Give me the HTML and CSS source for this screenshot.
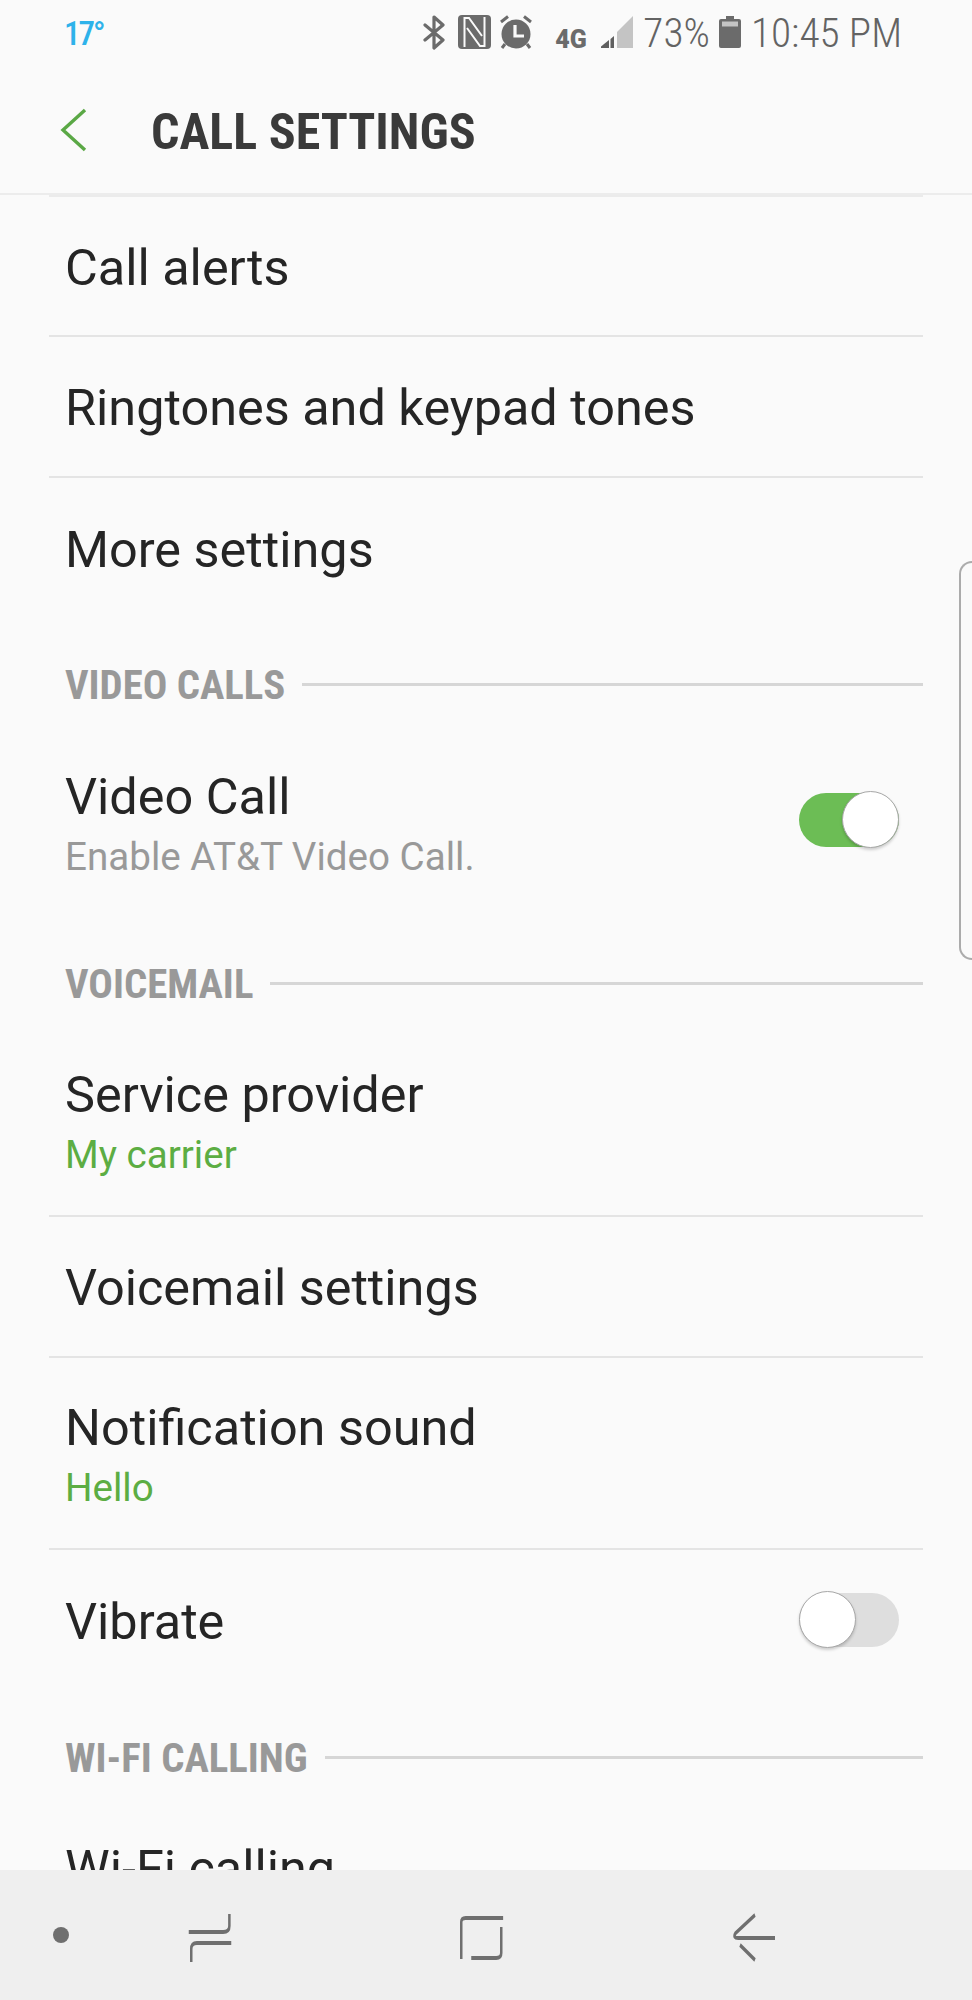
FILE: index.html
```html
<!DOCTYPE html>
<html lang="en">
<head>
<meta charset="utf-8">
<title>Call settings</title>
<link rel="stylesheet" href="styles.css">
</head>
<body>
<div class="screen">
  <div class="status">
    <span class="temp">17°</span>
    <div class="status-right">
      <svg class="ic-bt" width="22" height="35" viewBox="0 0 22 35"><path d="M2 10 L20 25 L11 33 V2 L20 10 L2 25" fill="none" stroke="#6b6b6b" stroke-width="3.2" stroke-linejoin="round" stroke-linecap="round"/></svg>
      <svg class="ic-nfc" width="33" height="34" viewBox="0 0 33 34"><rect width="33" height="34" rx="4" fill="#6b6b6b"/><path d="M6.5 32 V3 H11 L24 21" fill="none" stroke="#fafafa" stroke-width="2"/><path d="M26.5 2 V31 H22 L9 13" fill="none" stroke="#fafafa" stroke-width="2"/></svg>
      <svg class="ic-alarm" width="32" height="34" viewBox="0 0 32 34"><circle cx="16" cy="19" r="14.5" fill="#6b6b6b"/><path d="M15 10 V21 H24" fill="none" stroke="#fafafa" stroke-width="3.2"/><path d="M1 7 L8 1.5 M31 7 L24 1.5 M5 29 L2 33 M27 29 L30 33" stroke="#6b6b6b" stroke-width="3" fill="none"/></svg>
      <span class="net">4G</span>
      <svg class="ic-signal" width="32" height="34" viewBox="0 0 32 34"><path d="M0 33 V31.5 L8 25 V33 Z" fill="#5f5f5f"/><path d="M9.500 33 V24 L13 21 V33 Z" fill="#5f5f5f"/><path d="M16 33 V17 L32 1 V33 Z" fill="#c4c4c4"/></svg>
      <span class="pct">73%</span>
      <svg class="ic-batt" width="22" height="34" viewBox="0 0 22 34"><path d="M7 1 H15 V4 H20 A2 2 0 0 1 22 6 V31 A2 2 0 0 1 20 33 H2 A2 2 0 0 1 0 31 V6 A2 2 0 0 1 2 4 H7 Z" fill="#6b6b6b"/><rect x="3" y="6.500" width="16" height="5" fill="#c4c4c4"/></svg>
      <span class="time">10:45 PM</span>
    </div>
  </div>

  <header class="appbar">
    <svg class="back" width="28" height="44" viewBox="0 0 28 44"><path d="M25 2 L3 22 L25 42" fill="none" stroke="#5aa845" stroke-width="3.4"/></svg>
    <h1 class="title">CALL SETTINGS</h1>
  </header>

  <main class="list">
    <div class="row row-single row-first sep"><span class="label">Call alerts</span></div>
    <div class="row row-single sep"><span class="label">Ringtones and keypad tones</span></div>
    <div class="row row-single"><span class="label">More settings</span></div>

    <div class="section sec-video"><span class="section-name">VIDEO CALLS</span><span class="section-line"></span></div>
    <div class="row row-toggle row-video">
      <div class="texts"><span class="label">Video Call</span><span class="sub">Enable AT&amp;T Video Call.</span></div>
      <span class="toggle on"><span class="thumb"></span></span>
    </div>

    <div class="section sec-voicemail"><span class="section-name">VOICEMAIL</span><span class="section-line"></span></div>
    <div class="row row-double row-service sep"><div class="texts"><span class="label">Service provider</span><span class="sub green">My carrier</span></div></div>
    <div class="row row-single sep"><span class="label">Voicemail settings</span></div>
    <div class="row row-double row-notify sep"><div class="texts"><span class="label">Notification sound</span><span class="sub green">Hello</span></div></div>
    <div class="row row-toggle row-vibrate">
      <span class="label">Vibrate</span>
      <span class="toggle"><span class="thumb"></span></span>
    </div>

    <div class="section sec-wifi"><span class="section-name">WI-FI CALLING</span><span class="section-line"></span></div>
    <div class="row row-single row-wifi"><span class="label">Wi-Fi calling</span></div>
  </main>

  <nav class="navbar">
    <svg width="972" height="130" viewBox="0 0 972 130" class="nav-icons">
      <circle cx="61" cy="65" r="8" fill="#6f6f6f"/>
      <g transform="scale(0.625 1)" fill="none" stroke="#6f6f6f" stroke-width="4">
        <path d="M367 44 V56 Q367 62 357 62 H302"/>
        <path d="M370 73 H315 Q306 73 306 79 V92"/>
        <path d="M738 89 V52 Q738 48 745 48 H805"/>
        <path d="M802 57 V83 Q802 88 794 88 H754"/>
        <path d="M1208 45 L1177 63 Q1172 68 1181 68 H1240"/>
        <path d="M1184 75 L1208 90"/>
      </g>
    </svg>
  </nav>

  <div class="edge"></div>
</div>
</body>
</html>
```
FILE: styles.css
```css
* { box-sizing: border-box; }
html, body { margin: 0; padding: 0; }
body { background: #fafafa; font-family: Roboto, "Liberation Sans", sans-serif; color: #252525; }
.screen { position: relative; width: 972px; height: 2000px; overflow: hidden; display: flex; flex-direction: column; background: #fafafa; }

.status { height: 66px; flex: none; display: flex; justify-content: space-between; align-items: flex-start; padding: 15px 70px 0 64px; }
.temp { font-size: 33px; font-weight: 500; color: #2eb2ea; line-height: 36px; margin-top: 1px; font-stretch: 75%; letter-spacing: -2px; }
.status-right { display: flex; align-items: flex-start; height: 34px; }
.status-right svg { display: block; flex: none; }
.ic-bt { margin-right: 13px; }
.ic-nfc { margin-right: 9px; }
.ic-alarm { margin-right: 23px; }
.net { width: 32px; font-size: 25px; font-weight: 900; color: #6b6b6b; line-height: 20px; margin-top: 15px; margin-right: 14px; white-space: nowrap; }
.ic-signal { margin-right: 10px; }
.pct, .time { font-size: 41.300px; font-weight: 350; color: #636363; line-height: 36px; font-stretch: 75%; white-space: nowrap; }
.pct { margin-right: 9px; }
.ic-batt { margin-right: 10px; }

.appbar { height: 129px; flex: none; display: flex; align-items: center; padding: 0 0 0 60px; border-bottom: 2px solid #ececec; }
.back { flex: none; margin-right: 63px; }
.title { margin: 0; padding-top: 4px; font-size: 50px; font-weight: 700; color: #3a3a3a; font-stretch: 75%; line-height: 1; }

.list { flex: 1; min-height: 0; overflow: hidden; }
.row { margin: 0 49px; padding: 3px 16px 0; display: flex; align-items: center; }
.row-first { border-top: 2px solid #ebebeb; height: 142px; }
.row-single { height: 141px; }
.row-first.row-single { height: 142px; }
.row-double { height: 192px; }
.row-service { height: 204px; padding-top: 16px; }
.row-notify { padding-top: 5px; }
.sep { border-bottom: 2px solid #e4e4e4; }
.label { display: block; font-size: 50.400px; line-height: 60px; color: #252525; white-space: nowrap; }
.sub { display: block; font-size: 38.600px; line-height: 50px; color: #999; margin-top: 5px; white-space: nowrap; }
.sub.green { color: #5cad43; }
.texts { display: block; }
.row-toggle { justify-content: space-between; padding-right: 24px; }
.row-toggle .toggle { margin-bottom: 4px; }
.row-video { height: 213px; }
.row-video .texts { padding-top: 4px; }
.row-vibrate { height: 141px; }
.row-wifi { margin-top: 10px; }

.section { margin: 0 49px; padding-left: 16px; display: flex; align-items: center; height: 60px; gap: 17px; }
.sec-video { margin-top: 35px; }
.sec-voicemail { margin-top: 26px; }
.sec-wifi { margin-top: 36px; }
.section-name { font-size: 40.800px; font-weight: 700; color: #999; font-stretch: 75%; white-space: nowrap; padding-top: 2px; }
.section-line { flex: 1; height: 3px; background: #d6d6d6; }

.toggle { position: relative; display: block; width: 100px; height: 54px; border-radius: 27px; background: #dedede; flex: none; }
.toggle.on { background: #6cbd55; }
.thumb { position: absolute; left: 0; top: -2px; width: 57px; height: 57px; border-radius: 50%; background: #fff; border: 1.5px solid #a8a8a8; box-shadow: 0 2px 3px rgba(0,0,0,.18); }
.toggle.on .thumb { left: 43px; }

.navbar { height: 130px; flex: none; background: #efefef; }
.nav-icons { display: block; }

.edge { position: absolute; right: 0; top: 561px; width: 13px; height: 399px; border: 2px solid #ababab; border-right: 0; border-radius: 14px 0 0 14px; }
```
